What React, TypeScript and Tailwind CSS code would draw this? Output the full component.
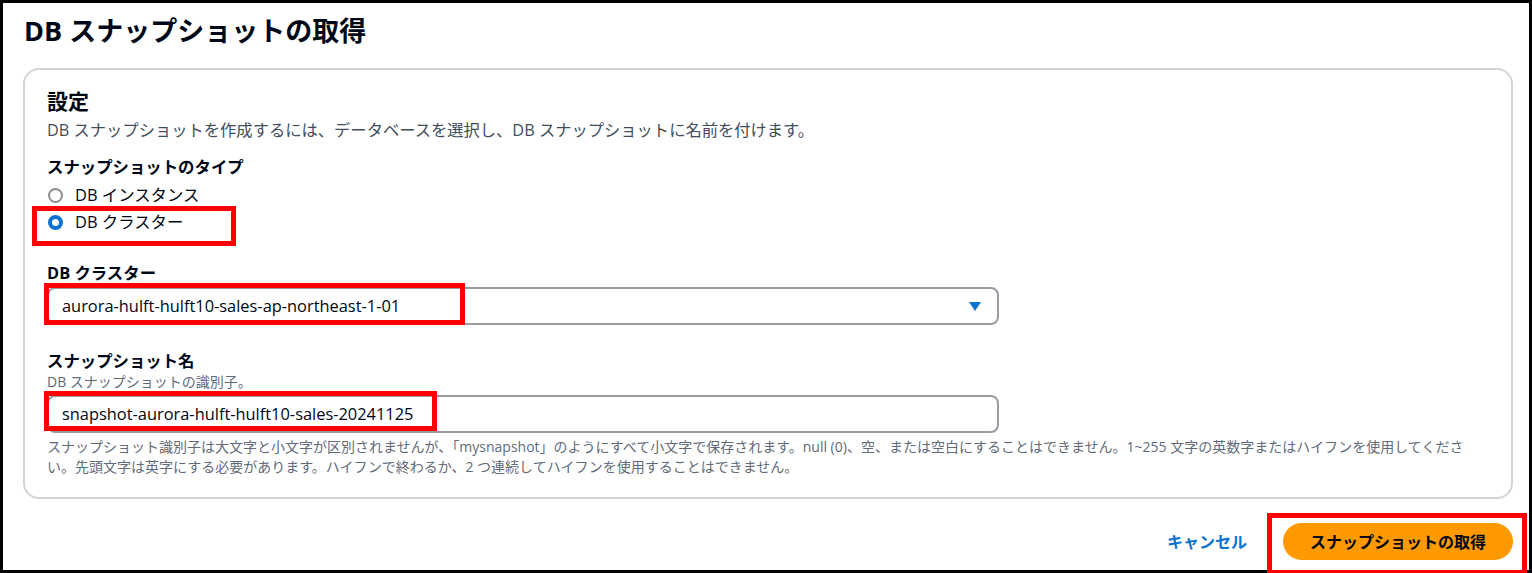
const font = {
  fontFamily: '"Open Sans", "Noto Sans CJK JP", sans-serif',
};

function Radio({ label, checked }: { label: string; checked?: boolean }) {
  return (
    <label className="flex h-[27px] items-center gap-[12px] pl-[1px] text-[16.4px] text-[#000716]">
      {checked ? (
        <span className="h-[15px] w-[15px] rounded-full border-[4px] border-[#0972d3] bg-white" />
      ) : (
        <span className="h-[15px] w-[15px] rounded-full border-2 border-[#8c8c94] bg-white" />
      )}
      <span>{label}</span>
    </label>
  );
}

function RedBox({ className }: { className: string }) {
  return (
    <div
      className={`pointer-events-none absolute border-[5px] border-[#ff0000] ${className}`}
    />
  );
}

export default function App() {
  return (
    <div className="relative h-[573px] w-[1532px] bg-white" style={font}>
      <div className="h-[573px] w-[1532px] border-[3px] border-black bg-white pl-[20px] pr-[16px] pt-[11px]">
        <h1 className="pl-[1px] text-[27px] font-bold leading-[34px] text-[#000716]">
          DB スナップショットの取得
        </h1>

        {/* 設定 */}
        <div className="mt-[20px] rounded-[16px] border-2 border-[#d4d4da] pb-[20px] pl-[22px] pt-[17px]">
          <h2 className="text-[21px] font-bold leading-[28px] text-[#000716]">
            設定
          </h2>
          <p className="mt-[4px] text-[16.3px] leading-[22px] text-[#414d5c]">
            DB スナップショットを作成するには、データベースを選択し、DB
            スナップショットに名前を付けます。
          </p>

          <div className="mt-[15px] text-[16.4px] font-bold leading-[22px] text-[#000716]">
            スナップショットのタイプ
          </div>
          <div className="mt-[4px] flex flex-col">
            <Radio label="DB インスタンス" />
            <Radio label="DB クラスター" checked />
          </div>

          <div className="mt-[26px] text-[16.4px] font-bold leading-[22px] text-[#000716]">
            DB クラスター
          </div>
          <div className="mt-[3px] flex h-[38px] w-[952px] items-center justify-between rounded-[8px] border-2 border-[#9a9aa2] pl-[13px] pr-[16px] text-[16.4px] text-[#000716]">
            <span>aurora-hulft-hulft10-sales-ap-northeast-1-01</span>
            <svg width="12" height="9" viewBox="0 0 12 9">
              <path d="M0 0 H12 L6 9 Z" fill="#0972d3" />
            </svg>
          </div>

          <div className="mt-[25px] text-[16.4px] font-bold leading-[22px] text-[#000716]">
            スナップショット名
          </div>
          <div className="mt-[1px] text-[14px] leading-[18px] text-[#5f6b7a]">
            DB スナップショットの識別子。
          </div>
          <div className="mt-[4px] flex h-[38px] w-[952px] items-center rounded-[8px] border-2 border-[#9a9aa2] pl-[13px] text-[16.4px] text-[#000716]">
            snapshot-aurora-hulft-hulft10-sales-20241125
          </div>
          <p className="mt-[4px] whitespace-nowrap text-[14px] leading-[20px] text-[#5f6b7a]">
            スナップショット識別子は大文字と小文字が区別されませんが、「mysnapshot」のようにすべて小文字で保存されます。null
            (0)、空、または空白にすることはできません。1~255
            文字の英数字またはハイフンを使用してくださ
            <br />
            い。先頭文字は英字にする必要があります。ハイフンで終わるか、2
            つ連続してハイフンを使用することはできません。
          </p>
        </div>

        {/* footer */}
        <div className="mt-[24px] flex items-center justify-end gap-[36px]">
          <button className="text-[16px] font-bold text-[#0972d3]">
            キャンセル
          </button>
          <button className="h-[37px] w-[230px] rounded-full bg-[#ff9900] text-[16px] font-bold text-[#000716]">
            スナップショットの取得
          </button>
        </div>
      </div>

      <RedBox className="left-[32px] top-[206px] h-[40px] w-[204px]" />
      <RedBox className="left-[44px] top-[283px] h-[42px] w-[421px]" />
      <RedBox className="left-[44px] top-[391px] h-[40px] w-[393px]" />
      <RedBox className="left-[1267px] top-[513px] h-[62px] w-[260px]" />
    </div>
  );
}
